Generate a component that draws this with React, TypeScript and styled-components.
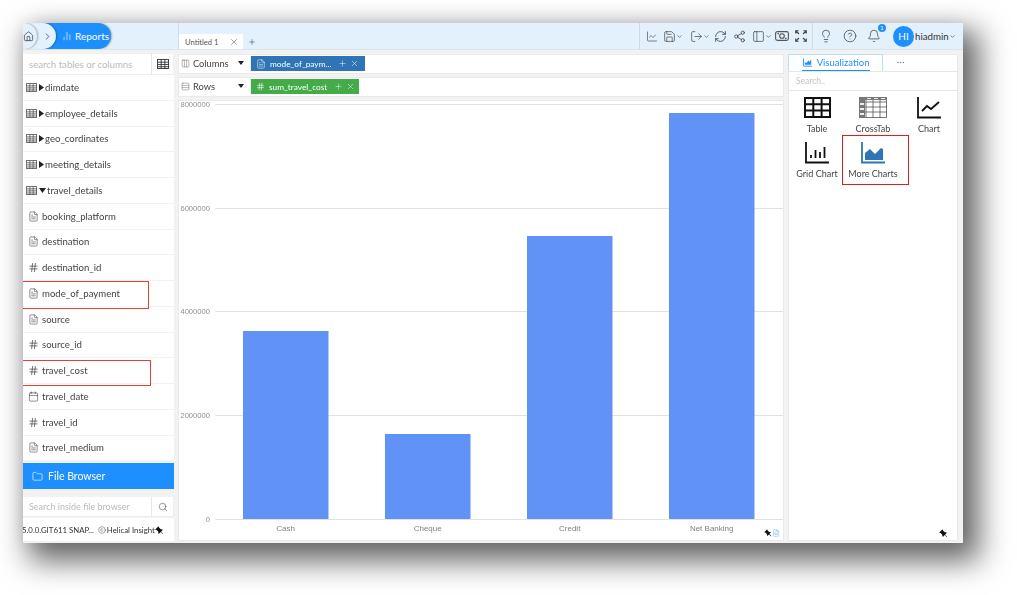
import React from "react";
import styled, { createGlobalStyle } from "styled-components";
import {
  House, ChevronRight, ChevronDown, ChartNoAxesColumn, ChartLine, Save, LogOut, RefreshCw, Share2,
  PanelLeft, Lightbulb, CircleHelp, Bell, Search, Folder, FileText, Hash, Calendar, Plus, X, Columns3, Rows3, Ellipsis, Copyright,
} from "lucide-react";
import { BsPinAngleFill } from "react-icons/bs";

const Global = createGlobalStyle`
  html, body { margin: 0; padding: 0; background: #fff; }
  body { font-family: "Lato", "Open Sans", sans-serif; width: 1017px; height: 595px; overflow: hidden; }
  * { box-sizing: border-box; }
`;

const Frame = styled.div`
  margin: 23px 0 0 23px;
  width: 940px;
  height: 520px;
  background: #f2f2f2;
  overflow: hidden;
  display: flex;
  flex-direction: column;
  box-shadow: 11px 13px 28px 5px rgba(0,0,0,.6), 0 0 18px rgba(0,0,0,.07);
  filter: blur(0.4px);
  color: #444;
`;
const Header = styled.header`
  height: 27px;
  flex: none;
  display: flex;
  background: #e3f1fc;
  border-bottom: 1px solid #d9e4ec;
`;
const Crumbs = styled.div`
  width: 151px;
  flex: none;
  display: flex;
  align-items: center;
  overflow: hidden;
`;
const Circle = styled.div<{ $z: number; $w: number; $ml: number }>`
  width: ${p => p.$w}px;
  height: 26px;
  flex: none;
  margin-left: ${p => p.$ml}px;
  border-radius: 0 13px 13px 0;
  background: #e3f1fc;
  box-shadow: 1px 0 2px rgba(0,0,0,.3);
  display: flex;
  align-items: center;
  justify-content: flex-end;
  padding-right: 3px;
  position: relative;
  z-index: ${p => p.$z};
  color: #333;
`;
const Pill = styled.div`
  width: 67px;
  height: 26px;
  flex: none;
  margin-left: -12px;
  padding-left: 18px;
  gap: 3px;
  border-radius: 0 13px 13px 0;
  background: #1e8fff;
  box-shadow: 1px 0 2px rgba(0,0,0,.3);
  color: #fff;
  font-size: 10px;
  display: flex;
  align-items: center;
`;
const HeaderMain = styled.div`
  flex: 1;
  margin-left: 4px;
  border-left: 1px solid #cfdbe4;
  display: flex;
  align-items: flex-end;
`;
const Tab = styled.div`
  width: 64px;
  height: 15px;
  background: #fff;
  font-size: 7.6px;
  color: #555;
  display: flex;
  align-items: center;
  justify-content: space-between;
  padding: 0 4px 0 6px;
`;
const AddTab = styled.div`
  margin: 0 0 3px 5px;
  display: flex;
  color: #444;
`;
const Tools = styled.div`
  margin-left: auto;
  height: 26px;
  display: flex;
  align-items: center;
  border-left: 1px solid #cfdbe4;
  padding-left: 6px;
  width: 173px;
  color: #444;
`;
const Tool = styled.span<{ $w: number }>`
  width: ${p => p.$w}px;
  flex: none;
  display: flex;
  align-items: center;
  justify-content: center;
`;
const UserTools = styled.div`
  height: 26px;
  width: 151px;
  display: flex;
  align-items: center;
  border-left: 1px solid #cfdbe4;
  padding-left: 1px;
  color: #444;
`;
const IconSlot = styled.span`
  position: relative;
  width: 24px;
  flex: none;
  display: flex;
  align-items: center;
  justify-content: center;
`;
const Badge = styled.span`
  position: absolute;
  top: -5px;
  right: 0;
  width: 8px;
  height: 8px;
  border-radius: 50%;
  background: #1e8fff;
  color: #fff;
  font-size: 6px;
  line-height: 8px;
  text-align: center;
`;
const Avatar = styled.div`
  width: 21px;
  height: 21px;
  margin-left: 7px;
  border-radius: 50%;
  background: #1e8fff;
  color: #fff;
  font-size: 10px;
  display: flex;
  align-items: center;
  justify-content: center;
  flex: none;
`;
const UserName = styled.span`
  font-size: 9.7px;
  margin-left: 1px;
  color: #333;
`;
const Body = styled.div`
  flex: 1;
  min-height: 0;
  display: flex;
  padding: 4px 0 2px;
`;
const Sidebar = styled.aside`
  width: 151px;
  flex: none;
  display: flex;
  flex-direction: column;
`;
const SearchRow = styled.div`
  height: 21px;
  flex: none;
  display: flex;
  background: #fff;
  border-bottom: 1px solid #eee;
  border-right: 1px solid #eee;
`;
const SearchText = styled.span<{ $size: number }>`
  flex: 1;
  font-size: ${p => p.$size}px;
  color: #bbb;
  padding-left: 6px;
  display: flex;
  align-items: center;
  border-right: 1px solid #e8e8e8;
  white-space: nowrap;
`;
const SearchBtn = styled.span`
  width: 21px;
  flex: none;
  display: flex;
  align-items: center;
  justify-content: center;
  color: #555;
`;
const List = styled.div`
  flex: none;
  background: #fff;
  margin-bottom: 2px;
`;
const Row = styled.div<{ $mark?: number; $top?: number; $h?: number }>`
  position: relative;
  height: 25.75px;
  display: flex;
  align-items: center;
  border-bottom: 1px solid #f2f2f2;
  font-size: 9.6px;
  color: #444;
  padding-left: 5px;
  gap: 3px;
  &::after {
    display: ${p => (p.$mark ? "block" : "none")};
    content: "";
    position: absolute;
    left: 0;
    top: ${p => p.$top ?? 0}px;
    height: ${p => p.$h ?? 26}px;
    width: ${p => p.$mark}px;
    border: 1.5px solid #e8402a;
    border-left: none;
  }
`;
const TableRow = styled(Row)`
  padding-left: 3px;
  gap: 1.5px;
`;
const FileBrowser = styled.div`
  height: 26px;
  flex: none;
  background: #1e8fff;
  color: #fff;
  font-size: 10.5px;
  display: flex;
  align-items: center;
  gap: 5px;
  padding-left: 9px;
`;
const FileSearch = styled(SearchRow)`
  margin-top: 8px;
  height: 20px;
`;
const Foot = styled.div`
  flex: 1;
  margin-top: 1px;
  background: #fff;
  font-size: 7.8px;
  color: #333;
  display: flex;
  align-items: center;
  white-space: nowrap;
  overflow: hidden;
  position: relative;
`;
const FootVersion = styled.span`
  margin-left: -1px;
  margin-right: 4px;
`;
const FootBrand = styled.span`
  display: flex;
  align-items: center;
  gap: 1px;
`;
const FootPin = styled.span`
  position: absolute;
  right: 10px;
  top: 8px;
  display: flex;
  color: #111;
`;
const Center = styled.main`
  width: 606px;
  margin-left: 4px;
  flex: none;
  display: flex;
  flex-direction: column;
  gap: 3px;
`;
const Shelf = styled.div`
  height: 20px;
  flex: none;
  display: flex;
  align-items: center;
  background: #fff;
  border: 1px solid #eaeaea;
  padding-bottom: 1px;
  font-size: 9.3px;
`;
const ShelfLabel = styled.div`
  width: 72px;
  flex: none;
  align-self: stretch;
  display: flex;
  align-items: center;
  gap: 3px;
  padding-left: 2px;
  border-right: 1px solid #eee;
  position: relative;
  color: #444;
`;
const Caret = styled.i`
  position: absolute;
  right: 6px;
  top: 6px;
  border-left: 3.5px solid transparent;
  border-right: 3.5px solid transparent;
  border-top: 4px solid #222;
`;
const Chip = styled.div<{ $bg: string; $w: number }>`
  width: ${p => p.$w}px;
  height: 15px;
  background: ${p => p.$bg};
  color: #fff;
  font-size: 8.3px;
  display: flex;
  align-items: center;
  padding-left: 5px;
  gap: 3px;
  white-space: nowrap;
`;
const ChipText = styled.span`
  margin: 0 4px 0 1px;
`;
const ChartPanel = styled.section`
  flex: 1;
  min-height: 0;
  background: #fff;
  border: 1px solid #eaeaea;
  position: relative;
`;
const ChartPins = styled.div`
  position: absolute;
  right: 3px;
  bottom: 3px;
  display: flex;
  align-items: center;
  color: #111;
`;
const ChartSvg = styled.svg`
  display: block;
  width: 100%;
  height: 100%;
  font-family: "Liberation Sans", sans-serif;
`;
const Right = styled.aside`
  width: 170px;
  margin-left: 4px;
  flex: none;
  background: #fff;
  border: 1px solid #eaeaea;
  display: flex;
  flex-direction: column;
  position: relative;
`;
const TabsRow = styled.div`
  height: 17px;
  flex: none;
  display: flex;
  margin: -1px 0 0 -1px;
`;
const VizTab = styled.div`
  width: 95px;
  border: 1px solid #b9e0fb;
  border-bottom: none;
  display: flex;
  justify-content: center;
`;
const VizInner = styled.div`
  width: 68px;
  display: flex;
  align-items: center;
  gap: 5px;
  color: #1e8fff;
  font-size: 9.5px;
  border-bottom: 1.5px solid #1e8fff;
  padding-left: 1px;
`;
const MoreTab = styled.div`
  width: 34px;
  display: flex;
  align-items: center;
  justify-content: center;
  color: #666;
`;
const VizSearch = styled.div`
  height: 20px;
  flex: none;
  margin: 0 -1px;
  border: 1px solid #e6e6e6;
  color: #c4c4c4;
  font-size: 8.5px;
  display: flex;
  align-items: center;
  padding-left: 7px;
`;
const VizGrid = styled.div`
  display: grid;
  grid-template-columns: repeat(3, 56px);
  grid-auto-rows: 45px;
  padding-top: 4px;
`;
const VizItem = styled.div`
  display: flex;
  flex-direction: column;
  align-items: center;
  font-size: 9px;
  color: #444;
  position: relative;
  white-space: nowrap;
`;
const VizIcon = styled.div`
  height: 25px;
  display: flex;
  align-items: center;
  justify-content: center;
  margin-bottom: 3px;
`;
const Annotation = styled.i`
  position: absolute;
  left: -3px;
  top: -5px;
  width: 67px;
  height: 50px;
  border: 1.5px solid #e21c1c;
`;
const PanelPin = styled.div`
  position: absolute;
  right: 9px;
  bottom: 2px;
  display: flex;
  color: #111;
`;

const TableGlyph = ({ s = 11, c = "#555" }: { s?: number; c?: string }) => (
  <svg width={s + 2} height={s} viewBox="0 0 13 11" fill="none" stroke={c} strokeWidth="1">
    <rect x=".5" y=".5" width="12" height="10" />
    <path d="M4.5 1v10M8.5 1v10M1 3.5h12M1 6h12M1 8.5h12" />
  </svg>
);
const CameraGlyph = () => (
  <svg width="14" height="12" viewBox="0 0 14 12" fill="none" stroke="#555" strokeWidth="1.1">
    <rect x=".6" y="1.6" width="12.8" height="8.8" rx="1.8" />
    <circle cx="7" cy="6" r="2.3" />
    <path d="M2.5 3.6h1.5M10 8.4h1.5" />
  </svg>
);
const ExpandGlyph = () => (
  <svg width="12" height="12" viewBox="0 0 12 12" fill="none" stroke="#444" strokeWidth="1.1">
    <path d="M.7 3.5V.7h2.8M8.5.7h2.8v2.8M11.3 8.5v2.8H8.5M3.5 11.3H.7V8.5M1 1l3 3M11 1L8 4M11 11L8 8M1 11l3-3" />
  </svg>
);
const PlayRight = () => (
  <svg width="5" height="7" viewBox="0 0 5 7"><path d="M0 0l5 3.5L0 7z" fill="#222" /></svg>
);
const PlayDown = () => (
  <svg width="7" height="5" viewBox="0 0 7 5"><path d="M0 0h7L3.5 5z" fill="#222" /></svg>
);
const Pin = ({ s = 9 }: { s?: number }) => <BsPinAngleFill size={s} style={{ transform: "scaleX(-1)" }} />;
const TxtFile = () => <FileText size={11} strokeWidth={1.3} color="#444" />;
const HashIcon = () => <Hash size={11} strokeWidth={1.6} color="#444" />;
const Cal = () => <Calendar size={11} strokeWidth={1.3} color="#444" />;

const tables = ["dimdate", "employee_details", "geo_cordinates", "meeting_details"];
const fields: { n: string; i: React.ReactNode; mark?: number; top?: number; h?: number }[] = [
  { n: "booking_platform", i: <TxtFile /> },
  { n: "destination", i: <TxtFile /> },
  { n: "destination_id", i: <HashIcon /> },
  { n: "mode_of_payment", i: <TxtFile />, mark: 125 },
  { n: "source", i: <TxtFile /> },
  { n: "source_id", i: <HashIcon /> },
  { n: "travel_cost", i: <HashIcon />, mark: 127, top: 2, h: 24 },
  { n: "travel_date", i: <Cal /> },
  { n: "travel_id", i: <HashIcon /> },
  { n: "travel_medium", i: <TxtFile /> },
];
const bars = [
  { l: "Cash", x: 64, y: 230 },
  { l: "Cheque", x: 206, y: 333 },
  { l: "Credit", x: 348, y: 135 },
  { l: "Net Banking", x: 490, y: 12 },
];
const ticks = [
  { l: "8000000", y: 3 },
  { l: "6000000", y: 107 },
  { l: "4000000", y: 210 },
  { l: "2000000", y: 314 },
  { l: "0", y: 418 },
];

const Chart = () => (
  <ChartSvg viewBox="0 0 604 439">
    {ticks.map(t => (
      <g key={t.l}>
        <text x="31" y={t.y + 3} textAnchor="end" fontSize="7.6" fill="#909090">{t.l}</text>
        <line x1="36" x2="604" y1={t.y + 0.5} y2={t.y + 0.5} stroke="#e2e2e2" />
      </g>
    ))}
    {bars.map(b => (
      <g key={b.l}>
        <rect x={b.x} y={b.y} width="85.5" height={418 - b.y} fill="#6193f7" />
        <text x={b.x + 42.7} y="429.5" textAnchor="middle" fontSize="8" fill="#808080">{b.l}</text>
      </g>
    ))}
  </ChartSvg>
);

export default function App() {
  return (
    <>
      <Global />
      <Frame>
        <Header>
          <Crumbs>
            <Circle $z={3} $w={14} $ml={0}><House size={11} strokeWidth={1.5} /></Circle>
            <Circle $z={2} $w={30} $ml={-11}><ChevronRight size={11} strokeWidth={1.5} /></Circle>
            <Pill><ChartNoAxesColumn size={10} strokeWidth={1.5} />Reports</Pill>
          </Crumbs>
          <HeaderMain>
            <Tab>Untitled 1<X size={10} strokeWidth={1.3} /></Tab>
            <AddTab><Plus size={8} strokeWidth={1.6} /></AddTab>
            <Tools>
              <Tool $w={12}><ChartLine size={13} strokeWidth={1.3} /></Tool>
              <Tool $w={30}><Save size={13} strokeWidth={1.3} /><ChevronDown size={7} /></Tool>
              <Tool $w={24}><LogOut size={13} strokeWidth={1.3} /><ChevronDown size={7} /></Tool>
              <Tool $w={16}><RefreshCw size={13} strokeWidth={1.5} /></Tool>
              <Tool $w={22}><Share2 size={13} strokeWidth={1.5} /></Tool>
              <Tool $w={23}><PanelLeft size={13} strokeWidth={1.3} /><ChevronDown size={7} /></Tool>
              <Tool $w={18}><CameraGlyph /></Tool>
              <Tool $w={20}><ExpandGlyph /></Tool>
            </Tools>
            <UserTools>
              <IconSlot><Lightbulb size={14} strokeWidth={1.3} /></IconSlot>
              <IconSlot><CircleHelp size={14} strokeWidth={1.3} /></IconSlot>
              <IconSlot><Bell size={14} strokeWidth={1.3} /><Badge>1</Badge></IconSlot>
              <Avatar>HI</Avatar>
              <UserName>hiadmin</UserName>
              <ChevronDown size={7} />
            </UserTools>
          </HeaderMain>
        </Header>
        <Body>
          <Sidebar>
            <SearchRow>
              <SearchText $size={9.6}>search tables or columns</SearchText>
              <SearchBtn><TableGlyph s={10} c="#333" /></SearchBtn>
            </SearchRow>
            <List>
              {tables.map(t => (
                <TableRow key={t}><TableGlyph s={9} /><PlayRight /><span>{t}</span></TableRow>
              ))}
              <TableRow><TableGlyph s={9} /><PlayDown /><span>travel_details</span></TableRow>
              {fields.map(f => (
                <Row key={f.n} $mark={f.mark} $top={f.top} $h={f.h}>{f.i}<span>{f.n}</span></Row>
              ))}
            </List>
            <FileBrowser><Folder size={11} strokeWidth={1.4} />File Browser</FileBrowser>
            <FileSearch>
              <SearchText $size={9}>Search inside file browser</SearchText>
              <SearchBtn><Search size={10} strokeWidth={1.4} /></SearchBtn>
            </FileSearch>
            <Foot>
              <FootVersion>5.0.0.GIT611 SNAP...</FootVersion>
              <FootBrand><Copyright size={8} strokeWidth={1.3} />Helical Insight</FootBrand>
              <FootPin><Pin /></FootPin>
            </Foot>
          </Sidebar>
          <Center>
            <Shelf>
              <ShelfLabel><Columns3 size={9} strokeWidth={1} />Columns<Caret /></ShelfLabel>
              <Chip $bg="#2f75b5" $w={114}>
                <FileText size={10} strokeWidth={1.2} /><ChipText>mode_of_paym...</ChipText>
                <Plus size={9} strokeWidth={1.2} /><X size={9} strokeWidth={1.3} />
              </Chip>
            </Shelf>
            <Shelf>
              <ShelfLabel><Rows3 size={9} strokeWidth={1} />Rows<Caret /></ShelfLabel>
              <Chip $bg="#43ac48" $w={108}>
                <Hash size={9} strokeWidth={1.6} /><ChipText>sum_travel_cost</ChipText>
                <Plus size={9} strokeWidth={1.2} /><X size={9} strokeWidth={1.3} />
              </Chip>
            </Shelf>
            <ChartPanel>
              <Chart />
              <ChartPins><Pin s={8} /><FileText size={8} color="#8cc4fa" /></ChartPins>
            </ChartPanel>
          </Center>
          <Right>
            <TabsRow>
              <VizTab>
                <VizInner>
                  <svg width="10" height="9" viewBox="0 0 10 9"><path d="M.5 0v8.5H10" stroke="#1e8fff" fill="none" /><path d="M2 7V4l2 1 2-3 1 2 2-3v6z" fill="#1e8fff" /></svg>
                  Visualization
                </VizInner>
              </VizTab>
              <MoreTab><Ellipsis size={9} strokeWidth={1.4} /></MoreTab>
            </TabsRow>
            <VizSearch>Search..</VizSearch>
            <VizGrid>
              <VizItem>
                <VizIcon>
                  <svg width="27" height="21" viewBox="0 0 27 21" fill="none" stroke="#111" strokeWidth="2">
                    <rect x="1" y="1" width="25" height="19" /><path d="M9.3 1v19M17.6 1v19M1 7.3h25M1 13.6h25" />
                  </svg>
                </VizIcon>
                Table
              </VizItem>
              <VizItem>
                <VizIcon>
                  <svg width="28" height="21" viewBox="0 0 28 21" fill="none" stroke="#555" strokeWidth=".8">
                    <rect x=".5" y=".5" width="27" height="20" /><path d="M7 1v20M14 1v20M21 1v20M1 5h27M1 10h27M1 15h27" />
                    <path d="M0 0h28v3H0zM0 0h6v21H0z" fill="#777" stroke="none" />
                    <path d="M8 1h4v1H8zM15 1h4v1h-4zM22 1h4v1h-4zM1 6h4v2H1zM1 11h4v2H1zM1 16h4v2H1z" fill="#eee" stroke="none" />
                  </svg>
                </VizIcon>
                CrossTab
              </VizItem>
              <VizItem>
                <VizIcon>
                  <svg width="24" height="22" viewBox="0 0 24 22" fill="none" stroke="#111" strokeWidth="1.8">
                    <path d="M1 0v20.5h23" /><path d="M5 14l5-5 4 3 8-7" />
                  </svg>
                </VizIcon>
                Chart
              </VizItem>
              <VizItem>
                <VizIcon>
                  <svg width="24" height="22" viewBox="0 0 24 22" fill="none" stroke="#111" strokeWidth="1.8">
                    <path d="M1 0v20.5h23" /><path d="M6 16v-3M10.5 16V8M15 16v-6M19.5 16V5" />
                  </svg>
                </VizIcon>
                Grid Chart
              </VizItem>
              <VizItem>
                <VizIcon>
                  <svg width="24" height="22" viewBox="0 0 24 22" fill="none">
                    <path d="M1 0v20.5h23" stroke="#2f75b5" strokeWidth="1.8" />
                    <path d="M4 18v-7l5-4 5 5 6-6 2 1v11z" fill="#2f75b5" />
                  </svg>
                </VizIcon>
                More Charts
                <Annotation />
              </VizItem>
            </VizGrid>
            <PanelPin><Pin /></PanelPin>
          </Right>
        </Body>
      </Frame>
    </>
  );
}
